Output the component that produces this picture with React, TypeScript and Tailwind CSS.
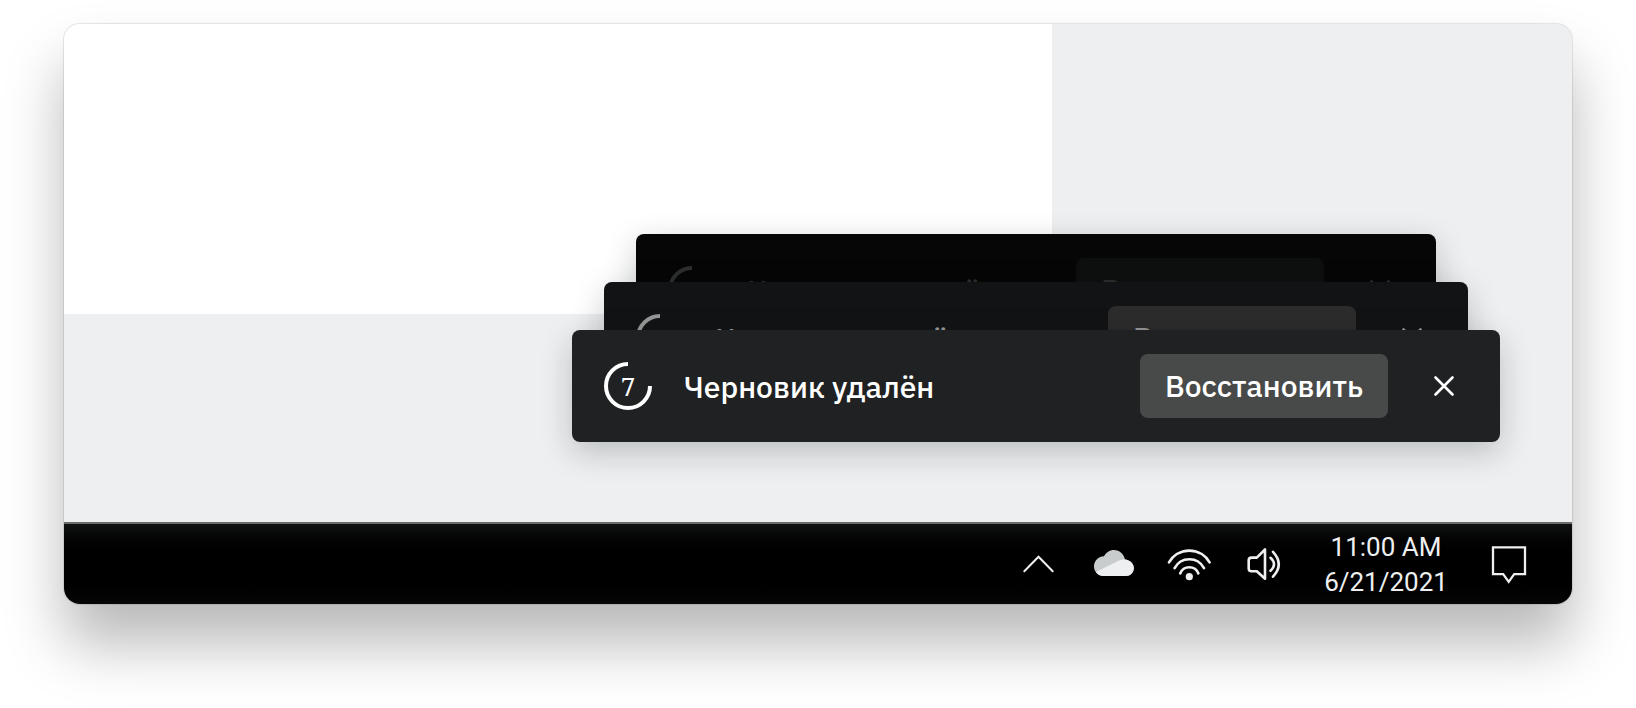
import type { ReactNode } from "react";

type Tone = {
  toast: string;
  button: string;
  ink: string;
};

const tones: Tone[] = [
  { toast: "w-[800px] bg-[#060606]", button: "bg-[#0e0f0f]", ink: "text-[#2d2e2e]" },
  { toast: "w-[864px] -mt-16 bg-[#121315]", button: "bg-[#2b2c2b]", ink: "text-[#969797]" },
  { toast: "w-[928px] -mt-16 bg-[#202122]", button: "bg-[#484a49]", ink: "text-white" },
];

function Toast({ tone }: { tone: Tone }) {
  return (
    <div
      className={`isolate flex h-28 max-w-full items-center rounded-lg px-8 shadow-[0_10px_32px_rgba(0,20,20,0.22)] ${tone.toast} ${tone.ink}`}
    >
      <div className="relative grid size-12 shrink-0 place-items-center">
        <svg className="absolute inset-0 size-12" viewBox="0 0 48 48" fill="none" stroke="currentColor" strokeWidth="4" aria-hidden="true">
          <path d="M24 2A22 22 0 1 0 46 24" />
        </svg>
        <span className="font-['Noto_Serif','DejaVu_Serif','Liberation_Serif',serif] text-[26px] leading-8">7</span>
      </div>
      <p className="ml-8 flex-1 pt-0.5 text-[30px] leading-10 font-medium whitespace-nowrap">Черновик удалён</p>
      <button type="button" className={`h-16 w-[248px] rounded-lg text-[30px] leading-10 font-medium ${tone.button}`}>
        Восстановить
      </button>
      <button type="button" aria-label="Закрыть" className="ml-8 grid size-12 place-items-center">
        <svg className="size-6" viewBox="0 0 24 24" fill="none" stroke="currentColor" strokeWidth="2.6" strokeLinecap="round" aria-hidden="true">
          <path d="M3.5 3.5l17 17M20.5 3.5l-17 17" />
        </svg>
      </button>
    </div>
  );
}

function TrayButton({ label, children }: { label: string; children: ReactNode }) {
  return (
    <button type="button" aria-label={label} className="grid size-11 shrink-0 place-items-center">
      <svg className="size-11" viewBox="0 0 44 44" fill="none" stroke="currentColor" strokeWidth="2.6" strokeLinecap="round" strokeLinejoin="round" aria-hidden="true">
        {children}
      </svg>
    </button>
  );
}

function Taskbar() {
  return (
    <footer className="flex h-[82px] items-center justify-end gap-[31px] border-t-2 border-[#6b6b6b] bg-linear-to-b from-[#101111] via-black via-50% to-[#060606] pr-[42px] text-[#eeeff1]">
      <TrayButton label="Скрытые значки">
        <path d="M7.3 29.3L21.5 14.7L35.7 29.3" strokeWidth="2" strokeLinejoin="miter" />
      </TrayButton>
      <TrayButton label="Облако">
        <path d="M11.500 34C6.200 34 2 29.800 2 24.500C2 18.700 6.500 14.300 12 14.300C14 10.500 17.500 8 22 8C27.500 8 31.800 12 33 17.500C38 18 41.800 21.500 41.800 26C41.800 30.500 38.300 34 33.800 34Z" fill="#c9cccd" stroke="none" />
        <path d="M4 30L25.500 19.300C28 18 30.500 17.400 33 17.500C38 18 41.800 21.500 41.800 26C41.800 30.500 38.300 34 33.800 34H11.500C8.400 34 5.700 32.500 4 30Z" fill="currentColor" stroke="none" />
      </TrayButton>
      <TrayButton label="Wi-Fi">
        <path d="M2 20.300A23.500 23.500 0 0 1 42.600 20.300M7.600 26.200A16.500 16.500 0 0 1 37 26.200M13.200 31.400A9.800 9.800 0 0 1 31.400 31.400" />
        <circle cx="22.300" cy="34.700" r="3.600" fill="currentColor" stroke="none" />
      </TrayButton>
      <TrayButton label="Громкость">
        <path d="M23 7.500V36.800L14.800 29.300H9.500Q6.700 29.300 6.700 26.500V18.400Q6.700 15.600 9.500 15.600H14.800Z" />
        <path d="M28.500 15.800Q35.500 22.300 28.500 28.800M31 9.800Q42.500 22.300 31 34.700" />
      </TrayButton>
      <time dateTime="2021-06-21T11:00" className="w-[138px] pt-0.5 text-center font-['Roboto',sans-serif] text-[26px] leading-[35px] whitespace-nowrap">
        <span className="block">11:00 AM</span>
        <span className="block">6/21/2021</span>
      </time>
      <TrayButton label="Уведомления">
        <path d="M7 5.400H39V32.200H28.200L22.700 39.800L17.200 32.200H7Z" strokeWidth="2.300" strokeLinejoin="miter" />
      </TrayButton>
    </footer>
  );
}

export default function App() {
  return (
    <div className="bg-white px-16 pt-6 pb-[104px] font-['IBM_Plex_Sans','Noto_Sans',sans-serif]">
      <main className="overflow-hidden rounded-2xl bg-[#eeeff1] shadow-[0_0_1px_1px_rgba(0,0,0,0.1),0_40px_60px_rgba(0,0,0,0.28)]">
        <section className="relative pr-[520px] pb-52">
          <div className="h-[290px] bg-white" />
          <div className="absolute right-[72px] bottom-20 flex flex-col items-center">
            {tones.map((tone) => (
              <Toast key={tone.toast} tone={tone} />
            ))}
          </div>
        </section>
        <Taskbar />
      </main>
    </div>
  );
}
